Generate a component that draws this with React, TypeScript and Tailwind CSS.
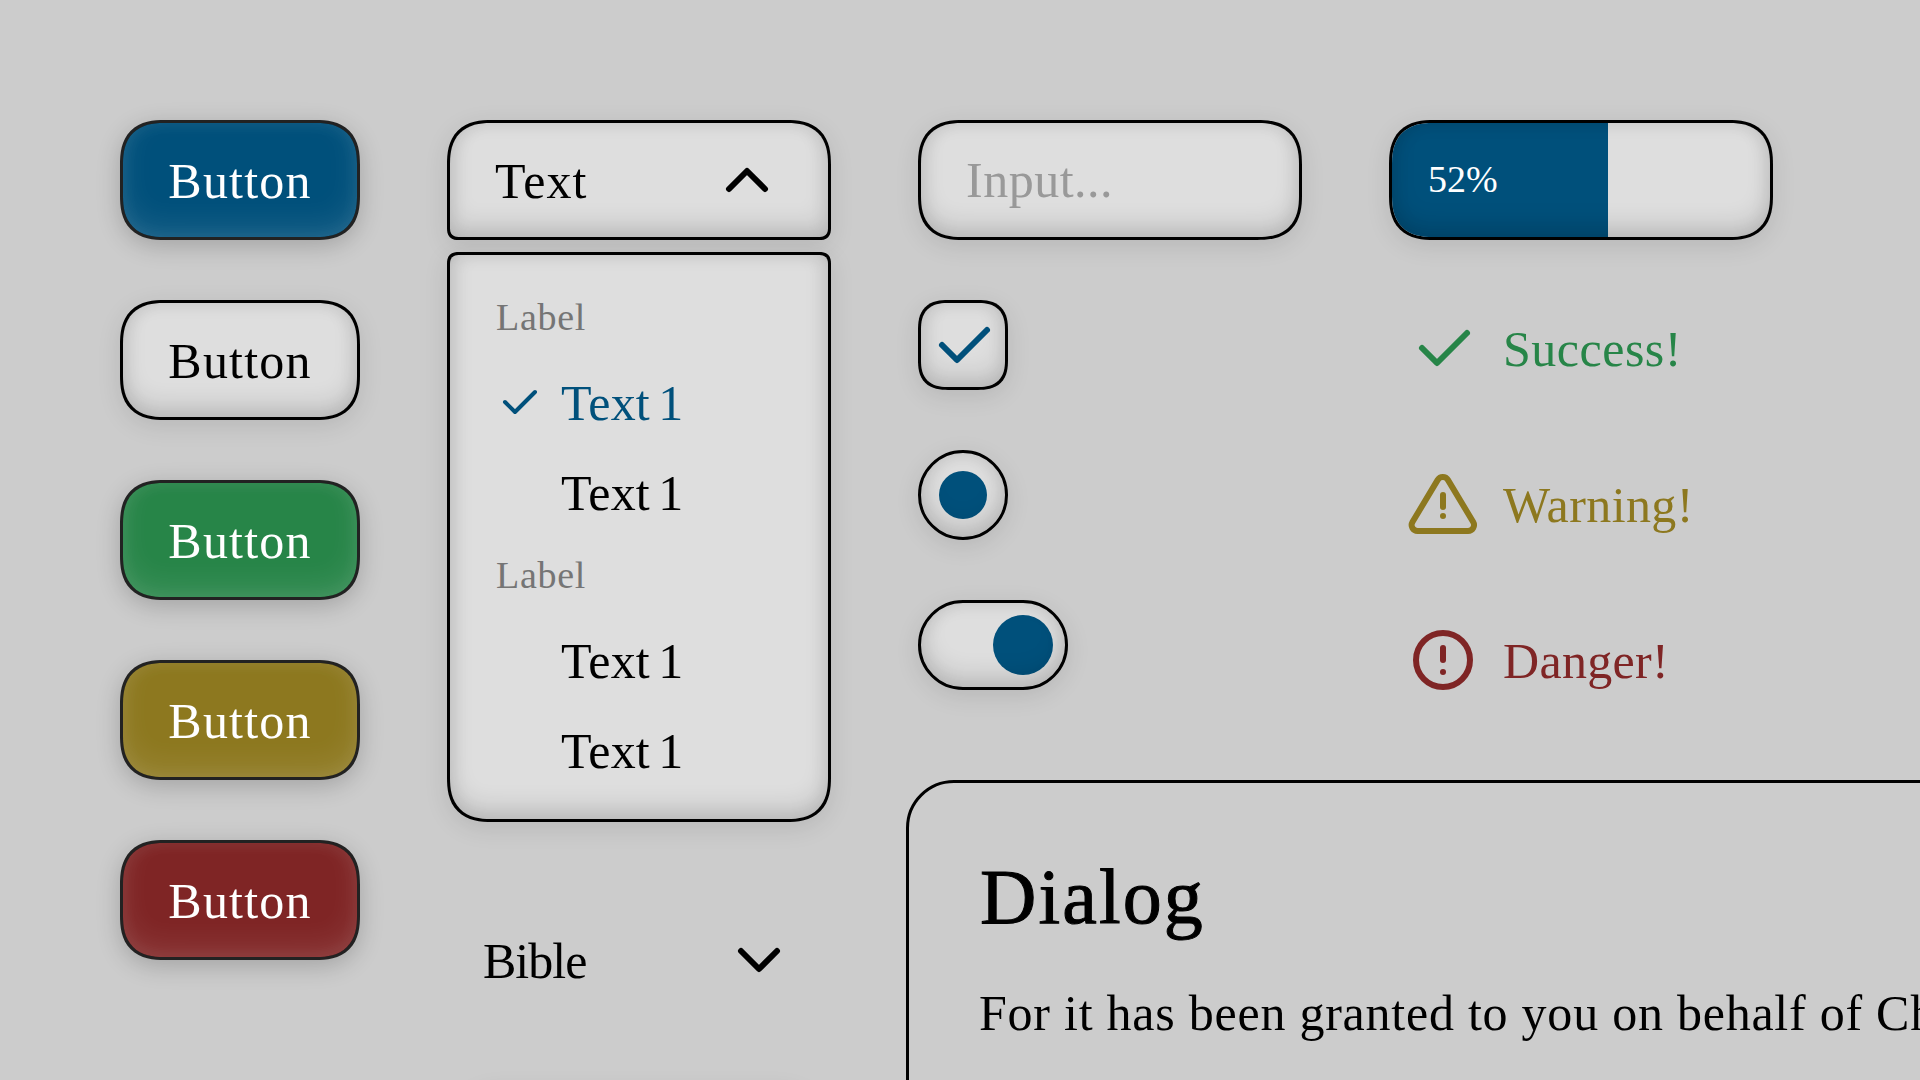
import type { ReactNode } from "react";

const surface =
  "relative border-[3px] border-black bg-[#dedede] shadow-[0_6px_24px_rgba(0,0,0,0.1)] [corner-shape:superellipse(1.35)]";

const roundSurface =
  "relative rounded-full border-[3px] border-black bg-[#dedede] shadow-[0_6px_24px_rgba(0,0,0,0.1)]";

function InnerShade() {
  return (
    <span className="pointer-events-none absolute -inset-[3px] rounded-[inherit] border-[3px] border-transparent shadow-[inset_0_-12px_24px_rgba(0,0,0,0.12),inset_0_0_18px_rgba(0,0,0,0.1)] [corner-shape:inherit]" />
  );
}

function Icon({ children, className }: { children: ReactNode; className: string }) {
  return (
    <svg
      viewBox="0 0 24 24"
      fill="none"
      stroke="currentColor"
      strokeWidth="2"
      strokeLinecap="round"
      strokeLinejoin="round"
      className={`shrink-0 ${className}`}
    >
      {children}
    </svg>
  );
}

const Check = ({ className }: { className: string }) => (
  <Icon className={className}>
    <path d="M5 12l5 5l10 -10" />
  </Icon>
);

const filled =
  "border-[#222222] text-white shadow-[0_6px_24px_rgba(0,0,0,0.2),inset_0_-12px_30px_rgba(255,255,255,0.1),inset_0_0_18px_rgba(255,255,255,0.07)]";

const buttons = [
  `bg-[#00507b] ${filled}`,
  "border-black bg-[#dedede] text-black shadow-[0_6px_24px_rgba(0,0,0,0.1),inset_0_-12px_24px_rgba(0,0,0,0.12),inset_0_0_18px_rgba(0,0,0,0.1)]",
  `bg-[#278548] ${filled}`,
  `bg-[#8d781f] ${filled}`,
  `bg-[#7f2525] ${filled}`,
];

function Label() {
  return (
    <div className="flex h-[78px] items-center pb-[3px] pl-px text-[38px] tracking-[0.7px] text-[#757575]">Label</div>
  );
}

function Option({ selected = false }: { selected?: boolean }) {
  return (
    <div className={`flex h-[90px] items-center gap-[18px] ${selected ? "text-[#00507b]" : "text-black"}`}>
      {selected ? <Check className="size-12" /> : <span className="size-12 shrink-0" />}
      <span className="pt-px tracking-[0.2px] [word-spacing:-4.5px]">Text 1</span>
    </div>
  );
}

export default function App() {
  return (
    <main className="h-[1080px] w-[1920px] overflow-hidden bg-[#cccccc] font-['Liberation_Serif',serif] text-[50px] leading-none text-black">
      <div className="flex h-full pt-[120px] pl-[120px]">
        <div className="flex w-[240px] shrink-0 flex-col gap-[60px]">
          {buttons.map((tone, i) => (
            <button
              key={i}
              className={`flex h-[120px] shrink-0 items-center justify-center rounded-[45px] border-[3px] pt-px tracking-[1.2px] [corner-shape:superellipse(1.35)] ${tone}`}
            >
              Button
            </button>
          ))}
        </div>

        <div className="ml-[87px] flex w-[384px] shrink-0 flex-col">
          <button
            className={`flex h-[120px] shrink-0 items-center justify-between rounded-t-[45px] rounded-b-[12px] pr-[45px] pl-[45px] ${surface}`}
          >
            <span className="pt-px tracking-[1.1px]">Text</span>
            <Icon className="size-[72px]">
              <path d="M6 15l6 -6l6 6" />
            </Icon>
            <InnerShade />
          </button>
          <div
            className={`mt-3 flex h-[570px] shrink-0 flex-col rounded-t-[12px] rounded-b-[45px] px-[45px] py-6 ${surface}`}
          >
            <Label />
            <Option selected />
            <Option />
            <Label />
            <Option />
            <Option />
            <InnerShade />
          </div>
          <div className="mt-[78px] flex h-[120px] shrink-0 items-center justify-between px-9">
            <span className="pt-px tracking-[-1px]">Bible</span>
            <Icon className="size-[72px]">
              <path d="M6 9l6 6l6 -6" />
            </Icon>
          </div>
          <div className={`mx-3 mt-[66px] h-[120px] shrink-0 rounded-[45px] ${surface}`} />
        </div>

        <div className="ml-[75px] flex w-[1014px] shrink-0 flex-col">
          <div className="flex h-[660px] shrink-0 gap-[87px] pl-3">
            <div className="flex w-[384px] shrink-0 flex-col">
              <div className={`flex h-[120px] shrink-0 items-center rounded-[45px] px-[45px] pb-px ${surface}`}>
                <span className="tracking-[0.5px] text-[#999999]">Input...</span>
                <InnerShade />
              </div>
              <div
                className={`mt-[60px] flex size-[90px] shrink-0 items-center justify-center rounded-[30px] text-[#00507b] ${surface}`}
              >
                <Check className="size-[72px]" />
                <InnerShade />
              </div>
              <div className={`mt-[60px] flex size-[90px] shrink-0 items-center justify-center ${roundSurface}`}>
                <span className="size-12 rounded-full bg-[#00507b]" />
                <InnerShade />
              </div>
              <div className={`mt-[60px] flex h-[90px] w-[150px] shrink-0 items-center justify-end pr-3 ${roundSurface}`}>
                <span className="size-[60px] rounded-full bg-[#00507b]" />
                <InnerShade />
              </div>
            </div>

            <div className="flex w-[384px] shrink-0 flex-col">
              <div className={`flex h-[120px] shrink-0 overflow-hidden rounded-[45px] ${surface}`}>
                <div className="flex w-[216px] items-center bg-[#00507b] pb-[2px] pl-9 text-[38px] text-white">52%</div>
                <InnerShade />
              </div>
              <div className="mt-[72px] ml-[18px] flex flex-col gap-[84px]">
                <div className="flex h-[72px] items-center gap-6 text-[#278548]">
                  <Check className="size-[72px]" />
                  <span className="pt-px tracking-[0.5px]">Success!</span>
                </div>
                <div className="flex h-[72px] items-center gap-6 text-[#8d781f]">
                  <Icon className="size-[72px]">
                    <path d="M12 9v4" />
                    <path d="M10.24 3.957l-8.422 14.06a1.989 1.989 0 0 0 1.7 2.983h16.845a1.989 1.989 0 0 0 1.7 -2.983l-8.423 -14.06a1.989 1.989 0 0 0 -3.4 0z" />
                    <path d="M12 16h.01" />
                  </Icon>
                  <span className="pt-px tracking-[0.4px]">Warning!</span>
                </div>
                <div className="flex h-[72px] items-center gap-6 text-[#7f2525]">
                  <Icon className="size-[72px]">
                    <path d="M3 12a9 9 0 1 0 18 0a9 9 0 0 0 -18 0" />
                    <path d="M12 8v4" />
                    <path d="M12 16h.01" />
                  </Icon>
                  <span className="pt-px tracking-[0.3px]">Danger!</span>
                </div>
              </div>
            </div>
          </div>

          <section className="h-[600px] w-[1500px] shrink-0 rounded-[48px] border-[3px] border-black px-[70px] pt-[75px]">
            <h2 className="h-[78px] pl-px text-[78px] tracking-[2.1px] [-webkit-text-stroke:1px_black]">Dialog</h2>
            <p className="mt-[52px] whitespace-nowrap tracking-[0.76px]">
              For it has been granted to you on behalf of Christ
            </p>
          </section>
        </div>
      </div>
    </main>
  );
}
